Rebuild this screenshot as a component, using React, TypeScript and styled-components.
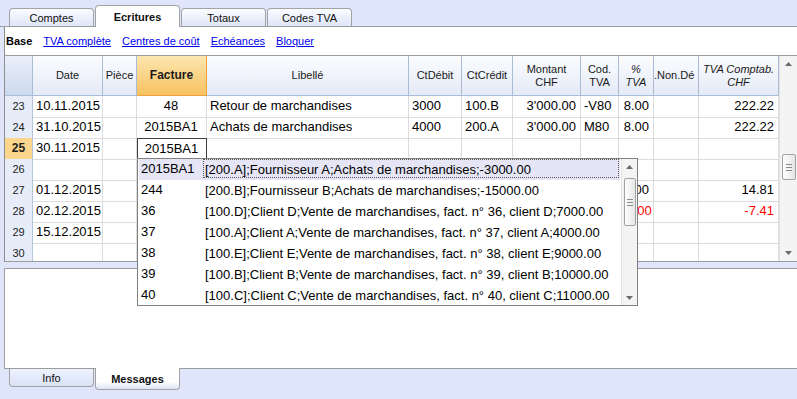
import React from 'react'
import styled, { createGlobalStyle } from 'styled-components'

const GlobalStyle = createGlobalStyle`
  body {
    margin: 0;
    font-family: "Liberation Sans", Arial, sans-serif;
  }
`

const COLS = [28, 70, 34, 70, 202, 53, 51, 68, 38, 35, 45, 80]
const gridCols = COLS.map((w) => `${w}px`).join(' ')

type Align = 'left' | 'right' | 'center'
const ALIGN: Align[] = ['left', 'left', 'center', 'left', 'left', 'left', 'right', 'left', 'right', 'left', 'right']

type Entry = { num: number; cells: string[]; current?: boolean; red?: boolean }

const rows: Entry[] = [
  { num: 23, cells: ['10.11.2015', '', '48', 'Retour de marchandises', '3000', '100.B', "3'000.00", '-V80', '8.00', '', '222.22'] },
  { num: 24, cells: ['31.10.2015', '', '2015BA1', 'Achats de marchandises', '4000', '200.A', "3'000.00", 'M80', '8.00', '', '222.22'] },
  { num: 25, cells: ['30.11.2015', '', '2015BA1', '', '', '', '', '', '', '', ''], current: true },
  { num: 26, cells: ['', '', '', '', '', '', '', '', '', '', ''] },
  { num: 27, cells: ['01.12.2015', '', '', '', '', '', '', '', '8.00', '', '14.81'] },
  { num: 28, cells: ['02.12.2015', '', '', '', '', '', '', '', '-8.00', '', '-7.41'], red: true },
  { num: 29, cells: ['15.12.2015', '', '', '', '', '', '', '', '', '', ''] },
  { num: 30, cells: ['', '', '', '', '', '', '', '', '', '', ''] },
]

const choices = [
  ['2015BA1', '[200.A];Fournisseur A;Achats de marchandises;-3000.00'],
  ['244', '[200.B];Fournisseur B;Achats de marchandises;-15000.00'],
  ['36', '[100.D];Client D;Vente de marchandises, fact. n° 36, client D;7000.00'],
  ['37', '[100.A];Client A;Vente de marchandises, fact. n° 37, client A;4000.00'],
  ['38', '[100.E];Client E;Vente de marchandises, fact. n° 38, client E;9000.00'],
  ['39', '[100.B];Client B;Vente de marchandises, fact. n° 39, client B;10000.00'],
  ['40', '[100.C];Client C;Vente de marchandises, fact. n° 40, client C;11000.00'],
]

const Window = styled.div`
  position: relative;
  width: 797px;
  height: 399px;
  overflow: hidden;
  display: flex;
  flex-direction: column;
  background: #dfe6fc;
  color: #000;
  font-family: "Liberation Sans", Arial, sans-serif;
`

const TabStrip = styled.div`
  flex-shrink: 0;
  height: 27px;
  box-sizing: border-box;
  display: flex;
  align-items: flex-end;
  gap: 1px;
  padding-left: 9px;
  border-bottom: 1px solid #9d9d9d;
`

const TopTab = styled.div<{ $active?: boolean }>`
  position: relative;
  width: 85px;
  height: ${(p) => (p.$active ? 22 : 18)}px;
  margin-bottom: ${(p) => (p.$active ? -1 : 0)}px;
  box-sizing: border-box;
  border: 1px solid #a3a3a3;
  border-bottom: none;
  border-radius: 4px 4px 0 0;
  background: ${(p) => (p.$active ? '#ffffff' : 'linear-gradient(#fbfcff, #dde5f8)')};
  display: flex;
  align-items: center;
  justify-content: center;
  font-size: 11px;
  font-weight: ${(p) => (p.$active ? 700 : 400)};
  color: #111;
`

const MainPanel = styled.div`
  flex-shrink: 0;
  height: 235px;
  margin-left: 4px;
  border-left: 1px solid #8e8e8e;
  background: #fff;
  display: flex;
  flex-direction: column;
`

const ViewBar = styled.div`
  height: 28px;
  display: flex;
  align-items: center;
  gap: 11px;
  padding-left: 1px;
  font-size: 11px;
`

const ViewCurrent = styled.span`
  font-weight: 700;
`

const ViewLink = styled.a`
  color: #0000f0;
  text-decoration: underline;
  cursor: pointer;
`

const Grid = styled.div`
  height: 207px;
  box-sizing: border-box;
  border-top: 1px solid #9d9d9d;
  border-bottom: 1px solid #9d9d9d;
  display: flex;
`

const Table = styled.div`
  width: 774px;
  display: flex;
  flex-direction: column;
  overflow: hidden;
`

const HeadRow = styled.div`
  flex-shrink: 0;
  height: 40px;
  display: grid;
  grid-template-columns: ${gridCols};
`

const BodyRow = styled.div`
  flex-shrink: 0;
  height: 21px;
  display: grid;
  grid-template-columns: ${gridCols};
`

const HeadCell = styled.div<{ $kind?: 'corner' | 'selected'; $italic?: boolean; $align?: Align }>`
  box-sizing: border-box;
  border-right: 1px solid ${(p) => (p.$kind === 'selected' ? '#eea23c' : '#a9bcd8')};
  border-bottom: 1px solid ${(p) => (p.$kind === 'selected' ? '#eea23c' : '#a9bcd8')};
  background: ${(p) =>
    p.$kind === 'selected'
      ? 'linear-gradient(#fde6b0, #f7c260)'
      : p.$kind === 'corner'
        ? 'linear-gradient(#eaf0fa, #cdd9ee)'
        : 'linear-gradient(#fbfcfe, #e4eaf6)'};
  display: flex;
  flex-direction: column;
  justify-content: center;
  text-align: ${(p) => p.$align || 'center'};
  font-size: ${(p) => (p.$kind === 'selected' ? 12 : 11)}px;
  font-weight: ${(p) => (p.$kind === 'selected' ? 700 : 400)};
  font-style: ${(p) => (p.$italic ? 'italic' : 'normal')};
  line-height: 13px;
  color: #1a1a1a;
  white-space: nowrap;
  overflow: hidden;
`

const RowHead = styled.div<{ $current?: boolean }>`
  box-sizing: border-box;
  border-right: 1px solid #b4c6de;
  border-bottom: 1px solid ${(p) => (p.$current ? '#f2b65a' : '#cad7ea')};
  background: ${(p) => (p.$current ? '#fdd68d' : '#e6edf8')};
  text-align: center;
  font-size: ${(p) => (p.$current ? 12 : 11)}px;
  font-weight: ${(p) => (p.$current ? 700 : 400)};
  line-height: 21px;
  color: #222;
`

const Cell = styled.div<{ $align: Align; $red?: boolean; $editing?: boolean }>`
  box-sizing: border-box;
  border-right: 1px solid #dcdcdc;
  border-bottom: 1px solid #dcdcdc;
  ${(p) => (p.$editing ? 'border: 1px solid #404040;' : '')}
  padding: 0 4px 0 3px;
  text-align: ${(p) => p.$align};
  font-size: 13px;
  line-height: ${(p) => (p.$editing ? 19 : 20)}px;
  color: ${(p) => (p.$red ? '#ff0000' : '#000')};
  white-space: nowrap;
  overflow: hidden;
`

const ScrollBar = styled.div<{ $width: number }>`
  width: ${(p) => p.$width}px;
  flex-shrink: 0;
  box-sizing: border-box;
  border-left: 1px solid #e2e2e2;
  background: #f4f4f4;
  display: flex;
  flex-direction: column;
  align-items: center;
`

const ArrowBox = styled.div<{ $height: number }>`
  height: ${(p) => p.$height}px;
  width: 100%;
  display: flex;
  align-items: center;
  justify-content: center;
  flex-shrink: 0;
`

const Track = styled.div`
  flex: 1;
  width: 100%;
  display: flex;
  flex-direction: column;
  align-items: center;
`

const Thumb = styled.div<{ $offset: number; $height: number }>`
  margin-top: ${(p) => p.$offset}px;
  width: calc(100% - 3px);
  height: ${(p) => p.$height}px;
  box-sizing: border-box;
  border: 1px solid #a2a2a2;
  border-radius: 2px;
  background: linear-gradient(90deg, #fdfdfd, #e6e6e6);
  display: flex;
  flex-direction: column;
  align-items: center;
  justify-content: center;
  gap: 2px;
`

const Grip = styled.div`
  width: 6px;
  height: 1px;
  background: #8a8a8a;
`

const Splitter = styled.div`
  flex-shrink: 0;
  height: 6px;
`

const LowerPanel = styled.div`
  flex-shrink: 0;
  height: 101px;
  box-sizing: border-box;
  margin-left: 4px;
  border: 1px solid #9d9d9d;
  border-right: none;
  background: #fff;
`

const BottomStrip = styled.div`
  display: flex;
  align-items: flex-start;
  gap: 1px;
  padding-left: 9px;
`

const BottomTab = styled.div<{ $active?: boolean }>`
  position: relative;
  width: 85px;
  height: ${(p) => (p.$active ? 22 : 18)}px;
  margin-top: ${(p) => (p.$active ? -1 : 0)}px;
  box-sizing: border-box;
  border: 1px solid #a3a3a3;
  border-top: none;
  border-radius: 0 0 4px 4px;
  background: ${(p) => (p.$active ? 'linear-gradient(#ffffff 65%, #dce4f7)' : 'linear-gradient(#eef2fd, #d9e2f6)')};
  display: flex;
  align-items: center;
  justify-content: center;
  font-size: 11px;
  font-weight: ${(p) => (p.$active ? 700 : 400)};
  color: #111;
`

const Popup = styled.div`
  position: absolute;
  left: 137px;
  top: 158px;
  width: 501px;
  height: 148px;
  box-sizing: border-box;
  border: 1px solid #808080;
  background: #fff;
  display: flex;
`

const ChoiceList = styled.div`
  flex: 1;
  padding: 0 1px 0 1px;
  display: flex;
  flex-direction: column;
  overflow: hidden;
`

const Choice = styled.div<{ $selected?: boolean }>`
  height: 21px;
  flex-shrink: 0;
  display: flex;
  background: ${(p) => (p.$selected ? '#e5e5f5' : 'transparent')};
  font-size: 13px;
  line-height: 19px;
  white-space: nowrap;
`

const ChoiceKey = styled.span`
  width: 64px;
  box-sizing: border-box;
  padding-left: 2px;
`

const ChoiceText = styled.span<{ $focus?: boolean }>`
  flex: 1;
  box-sizing: border-box;
  height: 19px;
  margin-right: 1px;
  padding-left: 1px;
  border: 1px dotted ${(p) => (p.$focus ? '#555' : 'transparent')};
  overflow: hidden;
`

const Arrow = ({ up }: { up?: boolean }) => (
  <svg width="7" height="4" viewBox="0 0 7 4">
    <polygon points={up ? '0,4 7,4 3.5,0' : '0,0 7,0 3.5,4'} fill="#6a6a6a" />
  </svg>
)

const VScroll = ({ width, top, bottom, offset, thumb }: { width: number; top: number; bottom: number; offset: number; thumb: number }) => (
  <ScrollBar $width={width}>
    <ArrowBox $height={top}>
      <Arrow up />
    </ArrowBox>
    <Track>
      <Thumb $offset={offset} $height={thumb}>
        <Grip />
        <Grip />
        <Grip />
      </Thumb>
    </Track>
    <ArrowBox $height={bottom}>
      <Arrow />
    </ArrowBox>
  </ScrollBar>
)

export default function App() {
  return (
    <>
      <GlobalStyle />
      <Window>
        <TabStrip>
          <TopTab>Comptes</TopTab>
          <TopTab $active>Ecritures</TopTab>
          <TopTab>Totaux</TopTab>
          <TopTab>Codes TVA</TopTab>
        </TabStrip>

        <MainPanel>
          <ViewBar>
            <ViewCurrent>Base</ViewCurrent>
            <ViewLink>TVA complète</ViewLink>
            <ViewLink>Centres de coût</ViewLink>
            <ViewLink>Echéances</ViewLink>
            <ViewLink>Bloquer</ViewLink>
          </ViewBar>

          <Grid>
            <Table>
              <HeadRow>
                <HeadCell $kind="corner" />
                <HeadCell>Date</HeadCell>
                <HeadCell>Pièce</HeadCell>
                <HeadCell $kind="selected">Facture</HeadCell>
                <HeadCell>Libellé</HeadCell>
                <HeadCell>CtDébit</HeadCell>
                <HeadCell>CtCrédit</HeadCell>
                <HeadCell>
                  <span>Montant</span>
                  <span>CHF</span>
                </HeadCell>
                <HeadCell>
                  <span>Cod.</span>
                  <span>TVA</span>
                </HeadCell>
                <HeadCell $italic>
                  <span>%</span>
                  <span>TVA</span>
                </HeadCell>
                <HeadCell $align="left">.Non.Dé</HeadCell>
                <HeadCell $italic>
                  <span>TVA Comptab.</span>
                  <span>CHF</span>
                </HeadCell>
              </HeadRow>

              {rows.map((row) => (
                <BodyRow key={row.num}>
                  <RowHead $current={row.current}>{row.num}</RowHead>
                  {row.cells.map((value, i) => (
                    <Cell
                      key={i}
                      $align={ALIGN[i]}
                      $red={row.red && (i === 8 || i === 10)}
                      $editing={row.current && i === 2}
                    >
                      {value}
                    </Cell>
                  ))}
                </BodyRow>
              ))}
            </Table>
            <VScroll width={18} top={16} bottom={16} offset={82} thumb={26} />
          </Grid>
        </MainPanel>

        <Splitter />
        <LowerPanel />

        <BottomStrip>
          <BottomTab>Info</BottomTab>
          <BottomTab $active>Messages</BottomTab>
        </BottomStrip>

        <Popup>
          <ChoiceList>
            {choices.map(([key, text], i) => (
              <Choice key={key} $selected={i === 0}>
                <ChoiceKey>{key}</ChoiceKey>
                <ChoiceText $focus={i === 0}>{text}</ChoiceText>
              </Choice>
            ))}
          </ChoiceList>
          <VScroll width={16} top={15} bottom={15} offset={4} thumb={48} />
        </Popup>
      </Window>
    </>
  )
}
